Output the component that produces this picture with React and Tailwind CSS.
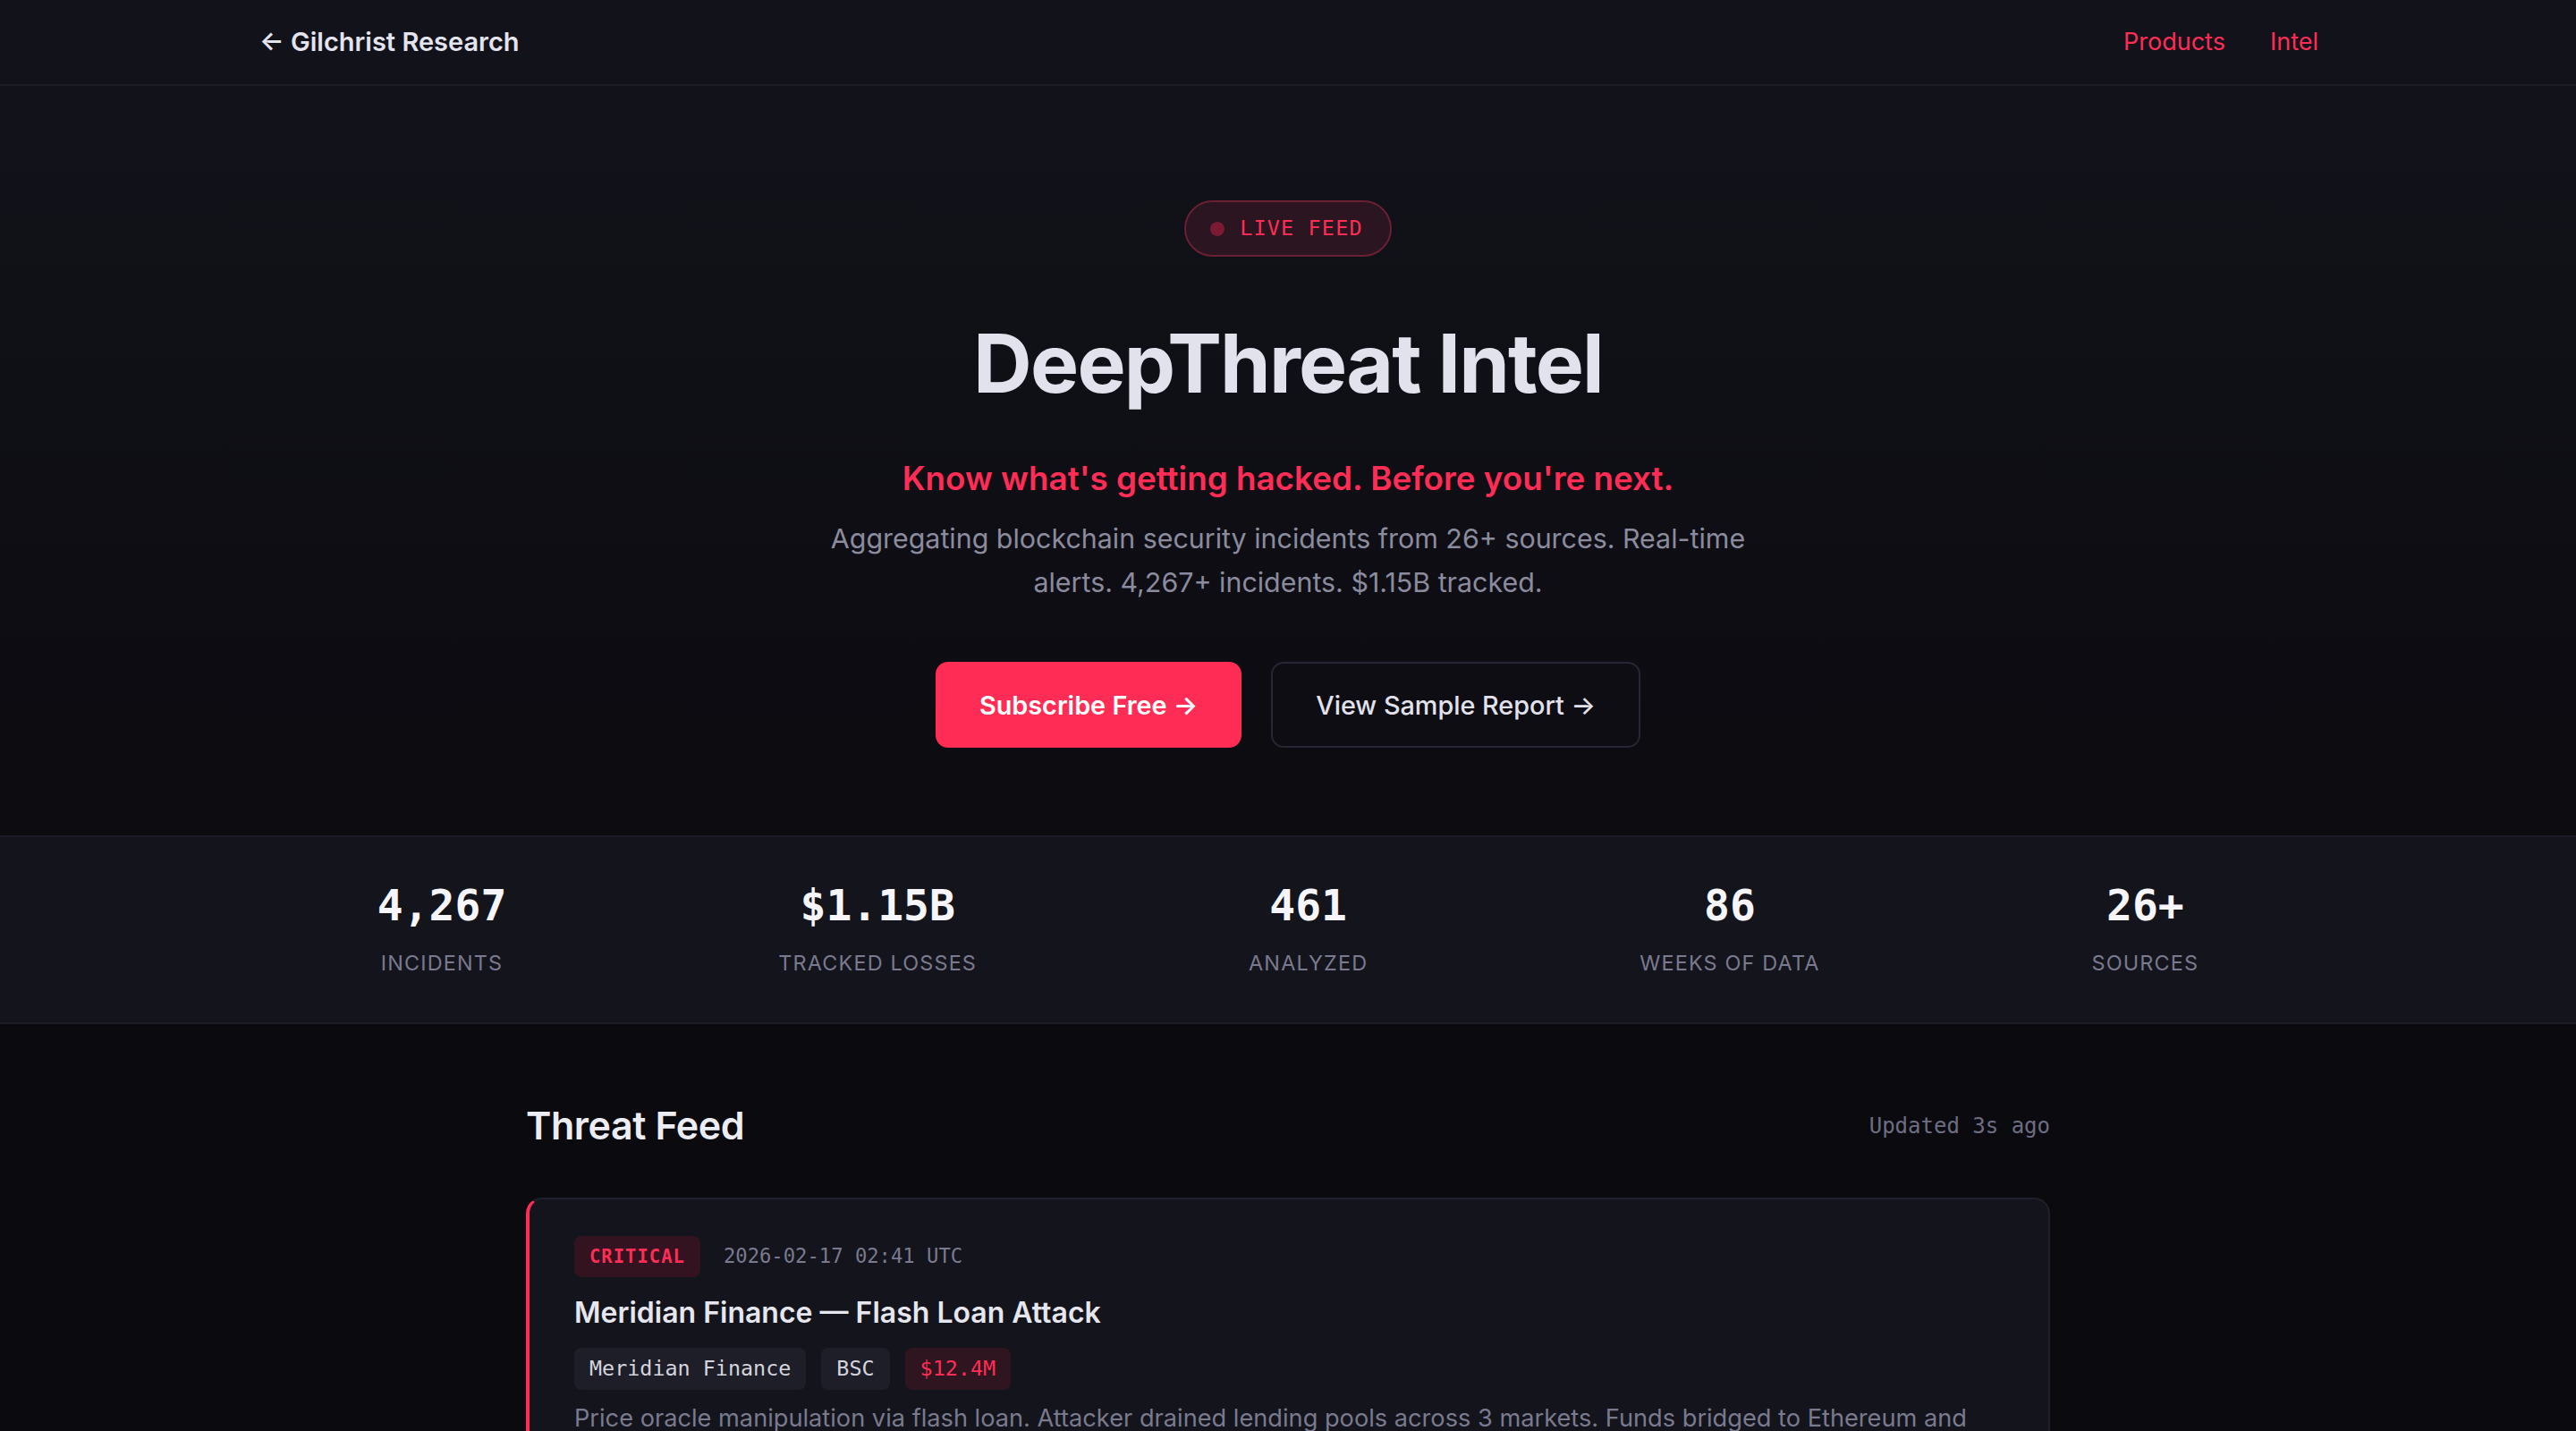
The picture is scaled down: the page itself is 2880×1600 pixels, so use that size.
const mono = "font-['DejaVu_Sans_Mono','Liberation_Mono',monospace]";

function Stat({ value, label }) {
  return (
    <div className="flex flex-col items-center">
      <div className={`${mono} text-[48px] font-bold leading-none text-[#f5f5fa]`}>{value}</div>
      <div className="mt-[27px] text-[23.4px] leading-[1.2] uppercase tracking-[0.05em] text-[#7a7a8e]">{label}</div>
    </div>
  );
}

function Tag({ children, red }) {
  return (
    <span
      className={`${mono} flex h-[47px] items-center rounded-[8px] px-[17px] text-[23.4px] ${
        red ? "bg-[#2e1520] text-[#ff2d55]" : "bg-[#1e1e29] text-[#d4d4de]"
      }`}
    >
      {children}
    </span>
  );
}

export default function App() {
  return (
    <div className="min-h-screen bg-[#0a0a0f] font-[Inter,'Noto_Sans',sans-serif] text-[#e4e4ee]">
      <header className="h-[96px] border-b-2 border-[#1c1c26] bg-[#12121a]">
        <div className="mx-auto flex h-full max-w-[2304px] items-center justify-between pl-[2px]">
          <a className="text-[29px] font-semibold text-[#e4e4ee]">← Gilchrist Research</a>
          <nav className="flex gap-[50px] text-[27px] text-[#ff2d55]">
            <a>Products</a>
            <a>Intel</a>
          </nav>
        </div>
      </header>

      <section className="bg-gradient-to-b from-[#12121a] to-[#0b0b10] pt-[128px] pb-[98px] text-center">
        <div className="inline-flex h-[63px] items-center gap-[17px] rounded-full border-2 border-[#6a1f33] bg-[#2a1520] pl-[27px] pr-[30px]">
          <span className="h-[16px] w-[16px] rounded-full bg-[#7a1a33]"></span>
          <span className={`${mono} text-[23.4px] tracking-[0.05em] text-[#ff2d55]`}>LIVE FEED</span>
        </div>
        <h1 className="mt-[69px] text-[91px] font-bold leading-[1.1] tracking-[-0.02em] text-[#e2e2ec]">
          DeepThreat Intel
        </h1>
        <p className="mt-[55px] text-[36.8px] font-semibold leading-[1.3] text-[#ff2d55]">
          Know what's getting hacked. Before you're next.
        </p>
        <p className="mx-auto mt-[19px] max-w-[1080px] text-[30.4px] leading-[1.6] text-[#8b8b9e]">
          Aggregating blockchain security incidents from 26+ sources. Real-time alerts. 4,267+ incidents. $1.15B tracked.
        </p>
        <div className="mt-[65px] flex justify-center gap-[33px]">
          <a className="flex h-[96px] items-center rounded-[14px] bg-[#ff2d55] px-[49px] text-[28.8px] font-semibold text-white">
            Subscribe Free →
          </a>
          <a className="flex h-[96px] items-center rounded-[14px] border-2 border-[#262634] bg-[#0d0d13] px-[48px] text-[28.8px] font-medium text-[#e2e2ec]">
            View Sample Report →
          </a>
        </div>
      </section>

      <section className="border-y-2 border-[#1c1c28] bg-[#13141c] pt-[52px] pb-[52px]">
        <div className="flex justify-center gap-[304px]">
          <Stat value="4,267" label="Incidents" />
          <Stat value="$1.15B" label="Tracked Losses" />
          <Stat value="461" label="Analyzed" />
          <Stat value="86" label="Weeks of Data" />
          <Stat value="26+" label="Sources" />
        </div>
      </section>

      <section className="mx-auto w-[1704px] pt-[88px] pb-[80px]">
        <div className="flex items-center justify-between">
          <h2 className="text-[43px] font-semibold leading-[1.2] tracking-[-0.01em] text-[#ececf3]">Threat Feed</h2>
          <span className={`${mono} text-[24px] text-[#6e6e82]`}>Updated 3s ago</span>
        </div>

        <div className="mt-[54px] rounded-[18px] border-2 border-l-4 border-[#1f1f2b] border-l-[#ff2d55] bg-[#13141c] pt-[41px] pr-[50px] pb-[44px] pl-[50px]">
          <div className="flex items-center gap-[26px]">
            <span className={`${mono} flex h-[46px] items-center rounded-[8px] bg-[#33131f] px-[17px] text-[20.5px] font-bold tracking-[0.05em] text-[#ff2d55]`}>
              CRITICAL
            </span>
            <span className={`${mono} text-[22.2px] text-[#7a7a8e]`}>2026-02-17 02:41 UTC</span>
          </div>
          <h3 className="mt-[19px] text-[32px] font-semibold leading-[1.3] text-[#e6e6ef]">
            Meridian Finance — Flash Loan Attack
          </h3>
          <div className="mt-[19px] flex gap-[17px]">
            <Tag>Meridian Finance</Tag>
            <Tag>BSC</Tag>
            <Tag red>$12.4M</Tag>
          </div>
          <p className="mt-[10px] text-[27.2px] leading-[1.6] text-[#7a7a8e]">
            Price oracle manipulation via flash loan. Attacker drained lending pools across 3 markets. Funds bridged to Ethereum and mixed through Tornado Cash.
          </p>
        </div>
      </section>
    </div>
  );
}
